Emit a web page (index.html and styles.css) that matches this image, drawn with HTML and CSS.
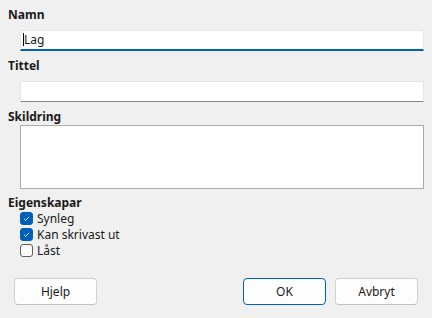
FILE: index.html
```html
<!DOCTYPE html>
<html lang="nn">
<head>
    <meta charset="UTF-8" />
    <title>Lag</title>
    <link rel="stylesheet" href="styles.css">
</head>
<body>
    <div class="dialog">
        <div class="field">
            <label class="caption">Namn</label>
            <div class="entry active"><span class="caret"></span>Lag</div>
        </div>
        <div class="field">
            <label class="caption">Tittel</label>
            <div class="entry"></div>
        </div>
        <div class="field">
            <label class="caption">Skildring</label>
            <div class="textbox"></div>
        </div>

        <div class="props">
            <div class="caption">Eigenskapar</div>
            <div class="check-row"><span class="box checked"><svg viewBox="0 0 13 13"><path d="M3.6 6.8 L5.6 8.7 L9.5 4.6" /></svg></span>Synleg</div>
            <div class="check-row"><span class="box checked"><svg viewBox="0 0 13 13"><path d="M3.6 6.8 L5.6 8.7 L9.5 4.6" /></svg></span>Kan skrivast ut</div>
            <div class="check-row"><span class="box"></span>Låst</div>
        </div>

        <div class="buttons">
            <button class="btn">Hjelp</button>
            <div class="spacer"></div>
            <button class="btn default">OK</button>
            <button class="btn">Avbryt</button>
        </div>
    </div>
</body>
</html>
```

FILE: styles.css
```css
body {
    margin: 0;
    background-color: #f0f0f0;
    color: #1a1a1a;
    font-family: 'Noto Sans', 'Liberation Sans', sans-serif;
    font-size: 12px;
}

.dialog {
    padding: 6px 8px 0 8px;
    width: 416px;
}

.caption {
    display: block;
    font-weight: bold;
    line-height: 17px;
    height: 17px;
}

.field {
    margin-bottom: 6px;
}

.entry {
    margin: 7px 0 0 12px;
    background-color: #fff;
    border: 1px solid #e5e5e5;
    border-bottom: 1px solid #868686;
    box-sizing: border-box;
    height: 21px;
    line-height: 19px;
    padding-left: 2px;
}

.entry.active {
    border-bottom: 2px solid #0063b1;
    line-height: 18px;
}

.caret {
    display: inline-block;
    width: 1px;
    height: 13px;
    background-color: #000;
    vertical-align: -2px;
}

.textbox {
    margin: 0 0 0 12px;
    height: 64px;
    box-sizing: border-box;
    background-color: #fff;
    border: 1px solid #acacac;
}

.props {
    margin-top: 4px;
}

.props .caption {
    height: 15px;
    line-height: 15px;
}

.check-row {
    display: flex;
    align-items: center;
    height: 16px;
    margin-left: 12px;
}

.box {
    width: 13px;
    height: 13px;
    box-sizing: border-box;
    border: 1px solid #5f5f5f;
    border-radius: 3px;
    background-color: #fbfbfb;
    margin-right: 4px;
    display: flex;
}

.box.checked {
    background-color: #005fb8;
    border-color: #005fb8;
}

.box svg {
    width: 11px;
    height: 11px;
    fill: none;
    stroke: #fff;
    stroke-width: 1;
}

.buttons {
    display: flex;
    gap: 9px;
    margin-top: 20px;
    padding: 0 6px;
}

.spacer {
    flex: 1;
}

.btn {
    width: 83px;
    height: 27px;
    font-family: inherit;
    font-size: 12px;
    color: #1a1a1a;
    background-color: #fdfdfd;
    border: 1px solid #d0d0d0;
    border-bottom-color: #c0c0c0;
    border-radius: 4px;
    padding: 0;
}

.btn.default {
    border-color: #005fb8;
}
```
